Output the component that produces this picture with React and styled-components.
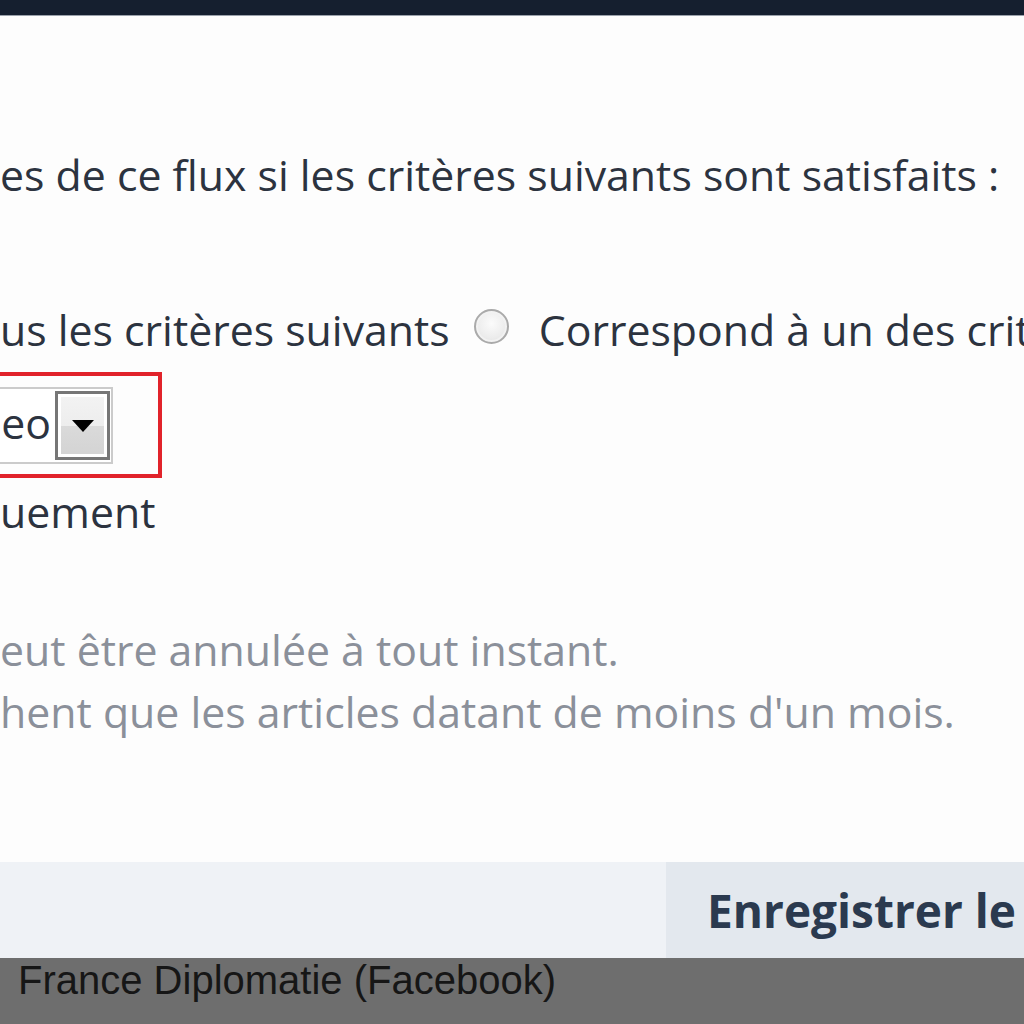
import React from 'react';
import styled, { createGlobalStyle } from 'styled-components';

const GlobalStyle = createGlobalStyle`
	html, body {
		margin: 0;
		padding: 0;
		background: #fdfdfd;
	}
	body {
		font-family: "Open Sans", "Noto Sans", sans-serif;
		overflow: hidden;
	}
`;

const Page = styled.div`
	width: 1024px;
	height: 1024px;
	display: flex;
	flex-direction: column;
	overflow: hidden;
`;

const TopBar = styled.div`
	height: 15px;
	background: #151f2f;
	border-bottom: 1px solid #9aa1ab;
	flex-shrink: 0;
`;

const Body = styled.div`
	flex: 1;
	display: flex;
	flex-direction: column;
	background: #fdfdfd;
	padding-top: 129px;
`;

const Line = styled.div`
	font-size: 42.8px;
	line-height: ${(p) => p.$lh || 60}px;
	color: ${(p) => (p.$muted ? '#8b909a' : '#2c333f')};
	white-space: nowrap;
	margin-top: ${(p) => p.$mt || 0}px;
	display: flex;
	align-items: center;
`;

const Radio = styled.span`
	display: inline-block;
	width: 35px;
	height: 35px;
	border-radius: 50%;
	margin: 0 30px 0 24px;
	border: 2px solid #aaaaaa;
	box-sizing: border-box;
	background: radial-gradient(circle at 50% 40%, #fbfbfb 0%, #ececec 60%, #dcdcdc 100%);
	box-shadow: inset 0 0 0 2px #f2f2f2;
	flex-shrink: 0;
	position: relative;
	top: -4px;
`;

const Highlight = styled.div`
	width: 166px;
	height: 106px;
	margin-top: 12px;
	margin-left: -4px;
	border: 4px solid #e1232b;
	box-sizing: border-box;
	display: flex;
	align-items: center;
`;

const Select = styled.div`
	height: 77px;
	width: 117px;
	margin-left: -4px;
	box-sizing: border-box;
	border: 2px solid #cbcbcb;
	background: #fff;
	display: flex;
	align-items: center;
	justify-content: flex-end;
	font-size: 42.8px;
	color: #2c333f;
`;

const SelectText = styled.span`
	margin-right: 4px;
	line-height: 1;
	position: relative;
	top: -2px;
`;

const DropButton = styled.span`
	width: 55px;
	height: 69px;
	margin-right: 1px;
	box-sizing: border-box;
	border: 3px solid #767676;
	box-shadow: inset 0 0 0 3px #fff;
	background: linear-gradient(#f3f3f3 0%, #ededed 50%, #dadada 51%, #d3d3d3 100%);
	display: flex;
	align-items: flex-start;
	justify-content: center;
	padding-top: 26px;
`;

const Footer = styled.div`
	height: 96px;
	display: flex;
	flex-shrink: 0;
	background: #eff2f6;
`;

const FooterSpace = styled.div`
	width: 666px;
`;

const SaveButton = styled.div`
	flex: 1;
	background: #e3e8ee;
	color: #2b3a4f;
	font-weight: 700;
	font-size: 46px;
	white-space: nowrap;
	display: flex;
	align-items: center;
	padding-left: 41px;
	overflow: hidden;
`;

const StatusBar = styled.div`
	height: 66px;
	background: #6e6e6e;
	flex-shrink: 0;
	font-family: "Liberation Sans", Arial, sans-serif;
	font-size: 40px;
	color: #161616;
	padding-left: 18px;
	line-height: 44px;
	white-space: nowrap;
`;

export default function App() {
	return (
		<Page>
			<GlobalStyle />
			<TopBar />
			<Body>
				<Line>es de ce flux si les critères suivants sont satisfaits :</Line>
				<Line $mt={95}>
					us les critères suivants
					<Radio />
					Correspond à un des critères suivants
				</Line>
				<Highlight>
					<Select>
						<SelectText>eo</SelectText>
						<DropButton>
							<svg width="22" height="12" viewBox="0 0 22 12">
								<polygon points="0,0 22,0 11,12" fill="#000" />
							</svg>
						</DropButton>
					</Select>
				</Highlight>
				<Line $mt={4}>uement</Line>
				<Line $muted $mt={77} $lh={62}>eut être annulée à tout instant.</Line>
				<Line $muted $lh={62}>hent que les articles datant de moins d'un mois.</Line>
			</Body>
			<Footer>
				<FooterSpace />
				<SaveButton>Enregistrer le filtre</SaveButton>
			</Footer>
			<StatusBar>France Diplomatie (Facebook)</StatusBar>
		</Page>
	);
}
